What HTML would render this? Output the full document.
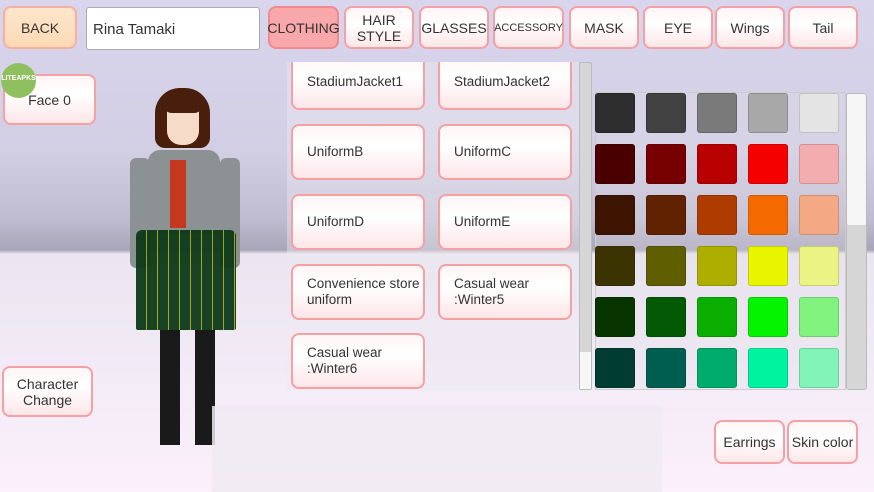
<!DOCTYPE html>
<html><head><style>
*{margin:0;padding:0;box-sizing:border-box}
body{width:874px;height:492px;overflow:hidden;position:relative;font-family:"Liberation Sans",sans-serif;
background:linear-gradient(to bottom,#d9d5ec 0px,#d2cee4 150px,#bfbbd0 220px,#a9a5b8 250px,#eae5f0 254px,#f1eaf5 350px,#fbf0fb 492px)}
.b{position:absolute;border:2px solid #f4a0a4;border-radius:8px;background:linear-gradient(#fff5f5,#fff 40%,#fde6e8);color:#333;display:flex;align-items:center;justify-content:center;text-align:center;font-size:14px;line-height:16px}
.l{justify-content:flex-start;text-align:left;padding-left:14px;font-size:13.5px}
.s{position:absolute;width:40px;height:40px;border-radius:3px;border:1px solid rgba(0,0,0,.15)}
</style></head><body>
<div class="b" style="left:3px;top:6px;width:74px;height:43px;background:linear-gradient(#fde6cc,#fdd9b4);border-color:#f6b0a0">BACK</div>
<div style="position:absolute;left:86px;top:7px;width:174px;height:43px;background:#fff;border:1px solid #aaa;border-radius:3px;font-size:15px;padding:13px 0 0 6px;color:#333">Rina Tamaki</div>
<div class="b" style="left:268px;top:6px;width:71px;height:43px;background:#f8a8aa;border-color:#f08a90">CLOTHING</div>
<div class="b" style="left:344px;top:6px;width:70px;height:43px;font-size:14px">HAIR<br>STYLE</div>
<div class="b" style="left:419px;top:6px;width:70px;height:43px">GLASSES</div>
<div class="b" style="left:493px;top:6px;width:71px;height:43px;font-size:11px">ACCESSORY</div>
<div class="b" style="left:569px;top:6px;width:70px;height:43px">MASK</div>
<div class="b" style="left:643px;top:6px;width:70px;height:43px">EYE</div>
<div class="b" style="left:715px;top:6px;width:70px;height:43px">Wings</div>
<div class="b" style="left:788px;top:6px;width:70px;height:43px">Tail</div>
<div class="b" style="left:3px;top:74px;width:93px;height:51px">Face 0</div>
<div style="position:absolute;left:1px;top:63px;width:35px;height:35px;border-radius:50%;background:#8fc060;color:#fff;font-size:7px;font-weight:bold;padding-top:12px;text-align:center">LITEAPKS</div>
<div class="b" style="left:2px;top:366px;width:91px;height:51px">Character<br>Change</div>

<!-- character -->
<div style="position:absolute;left:155px;top:88px;width:55px;height:60px;background:#4a1e0c;border-radius:25px 25px 10px 10px"></div>
<div style="position:absolute;left:167px;top:105px;width:32px;height:40px;background:#f6dcc8;border-radius:6px 6px 14px 14px"></div>
<div style="position:absolute;left:163px;top:95px;width:40px;height:18px;background:#4a1e0c;border-radius:10px"></div>
<div style="position:absolute;left:148px;top:150px;width:72px;height:85px;background:#8c9294;border-radius:12px 12px 4px 4px"></div>
<div style="position:absolute;left:130px;top:158px;width:20px;height:110px;background:#8c9294;border-radius:6px"></div>
<div style="position:absolute;left:220px;top:158px;width:20px;height:110px;background:#8c9294;border-radius:6px"></div>
<div style="position:absolute;left:170px;top:160px;width:16px;height:68px;background:#c43820"></div>
<div style="position:absolute;left:136px;top:230px;width:100px;height:100px;background:repeating-linear-gradient(90deg,#0c3a18 0 10px,#a8a020 10px 11px),#0c3a18;border-radius:6px 6px 2px 2px;opacity:.95"></div>
<div style="position:absolute;left:160px;top:330px;width:20px;height:115px;background:#1a1a1a"></div>
<div style="position:absolute;left:195px;top:330px;width:20px;height:115px;background:#1a1a1a"></div>

<!-- list panel -->
<div style="position:absolute;left:287px;top:62px;width:292px;height:328px;background:rgba(235,232,240,.45);overflow:hidden">
<div class="b l" style="left:4px;top:-8px;width:134px;height:56px">StadiumJacket1</div>
<div class="b l" style="left:151px;top:-8px;width:134px;height:56px">StadiumJacket2</div>
<div class="b l" style="left:4px;top:62px;width:134px;height:56px">UniformB</div>
<div class="b l" style="left:151px;top:62px;width:134px;height:56px">UniformC</div>
<div class="b l" style="left:4px;top:132px;width:134px;height:56px">UniformD</div>
<div class="b l" style="left:151px;top:132px;width:134px;height:56px">UniformE</div>
<div class="b l" style="left:4px;top:202px;width:134px;height:56px">Convenience store<br>uniform</div>
<div class="b l" style="left:151px;top:202px;width:134px;height:56px">Casual wear<br>:Winter5</div>
<div class="b l" style="left:4px;top:271px;width:134px;height:56px">Casual wear<br>:Winter6</div>
</div>
<div style="position:absolute;left:579px;top:62px;width:13px;height:328px;background:#d6d6d6;border:1px solid #bbb;border-radius:2px"></div>
<div style="position:absolute;left:580px;top:352px;width:11px;height:37px;background:#f6f6f6"></div>

<!-- color panel -->
<div style="position:absolute;left:595px;top:92px;width:251px;height:298px;background:rgba(225,222,232,.3);border:1px solid #ccc"></div>
<div style="position:absolute;left:846px;top:93px;width:21px;height:297px;background:#d6d6d6;border:1px solid #bbb;border-radius:3px"></div>
<div style="position:absolute;left:847px;top:94px;width:19px;height:131px;background:#f5f5f5;border-radius:2px"></div>
<div class="s" style="left:595px;top:93px;background:#2e2e2e"></div>
<div class="s" style="left:646px;top:93px;background:#414141"></div>
<div class="s" style="left:697px;top:93px;background:#7a7a7a"></div>
<div class="s" style="left:748px;top:93px;background:#a8a8a8"></div>
<div class="s" style="left:799px;top:93px;background:#e4e4e4"></div>
<div class="s" style="left:595px;top:144px;background:#4b0000"></div>
<div class="s" style="left:646px;top:144px;background:#760000"></div>
<div class="s" style="left:697px;top:144px;background:#b80000"></div>
<div class="s" style="left:748px;top:144px;background:#f50000"></div>
<div class="s" style="left:799px;top:144px;background:#f4adae"></div>
<div class="s" style="left:595px;top:195px;background:#3c1400"></div>
<div class="s" style="left:646px;top:195px;background:#602200"></div>
<div class="s" style="left:697px;top:195px;background:#ae3c00"></div>
<div class="s" style="left:748px;top:195px;background:#f56a00"></div>
<div class="s" style="left:799px;top:195px;background:#f4a883"></div>
<div class="s" style="left:595px;top:246px;background:#3c3400"></div>
<div class="s" style="left:646px;top:246px;background:#5f5e00"></div>
<div class="s" style="left:697px;top:246px;background:#aeae00"></div>
<div class="s" style="left:748px;top:246px;background:#e8f400"></div>
<div class="s" style="left:799px;top:246px;background:#eaf383"></div>
<div class="s" style="left:595px;top:297px;background:#083400"></div>
<div class="s" style="left:646px;top:297px;background:#045a04"></div>
<div class="s" style="left:697px;top:297px;background:#0aae00"></div>
<div class="s" style="left:748px;top:297px;background:#04f400"></div>
<div class="s" style="left:799px;top:297px;background:#82f27e"></div>
<div class="s" style="left:595px;top:348px;background:#003c32"></div>
<div class="s" style="left:646px;top:348px;background:#005e50"></div>
<div class="s" style="left:697px;top:348px;background:#00ac6c"></div>
<div class="s" style="left:748px;top:348px;background:#00f4a0"></div>
<div class="s" style="left:799px;top:348px;background:#82f4b8"></div>

<div style="position:absolute;left:212px;top:406px;width:450px;height:86px;background:rgba(240,234,242,.85)"></div>
<div class="b" style="left:714px;top:420px;width:71px;height:44px">Earrings</div>
<div class="b" style="left:787px;top:420px;width:71px;height:44px">Skin color</div>
</body></html>
